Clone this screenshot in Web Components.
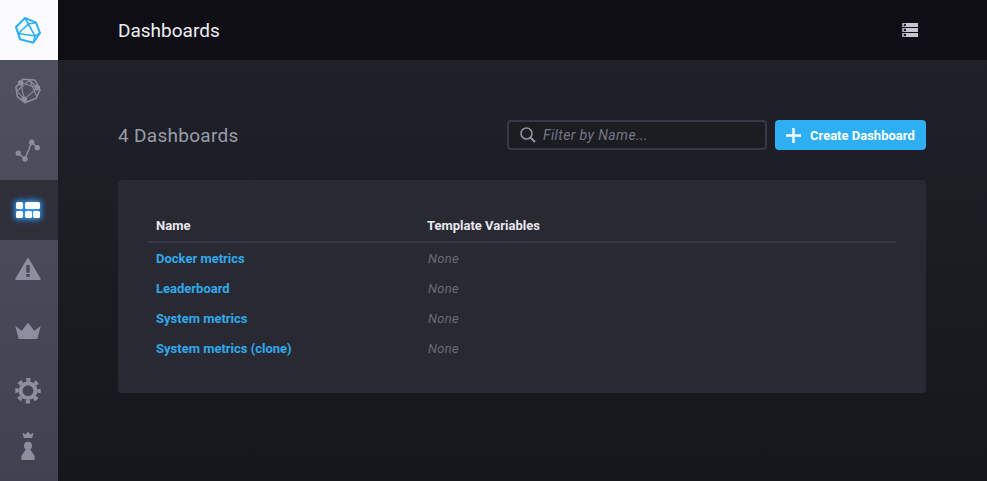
<!DOCTYPE html>
<html>
<head>
<meta charset="utf-8">
<title>Dashboards</title>
<style>
  html, body { margin: 0; height: 100%; }
  body { background: #0f0e15; font-family: Roboto, "Liberation Sans", sans-serif; overflow: hidden; }
</style>
</head>
<body>
<app-shell>
  <side-nav slot="nav"></side-nav>
  <page-header slot="header" title="Dashboards"></page-header>
  <dash-toolbar count="4 Dashboards"></dash-toolbar>
  <dash-table>
    <dash-row name="Docker metrics"></dash-row>
    <dash-row name="Leaderboard"></dash-row>
    <dash-row name="System metrics"></dash-row>
    <dash-row name="System metrics (clone)"></dash-row>
  </dash-table>
</app-shell>

<script>
// Shell: sidebar on the left, header and scrolling page on the right
class AppShell extends HTMLElement {
  constructor() {
    super();
    this.attachShadow({ mode: 'open' });
    this.shadowRoot.innerHTML = `
      <style>
        :host { display: flex; width: 987px; height: 481px; }
        .main { flex: 1; display: flex; flex-direction: column; min-width: 0; }
        .page {
          flex: 1;
          display: flex;
          flex-direction: column;
          padding: 60px 61px 0 60px;
          background: linear-gradient(to bottom, #202028 0%, #16161d 100%);
        }
      </style>
      <slot name="nav"></slot>
      <div class="main">
        <slot name="header"></slot>
        <div class="page"><slot></slot></div>
      </div>
    `;
  }
}

// Sidebar icons, drawn in the 58x60 box of their cell
const NAV_ICONS = {
  logo: `
    <g fill="none" stroke="currentColor" stroke-linejoin="round">
      <path stroke-width="2" d="M16 27 L25 18 L36 22.700 L40 33 L33.300 42.700 L20 39.300 Z"/>
      <path stroke-width="1.600" d="M25 18 L28.300 24 L36 22.700 M28.300 24 L18.500 33.500 L35 36 Z M16 27 L18.500 33.500 L20 39.300 M40 33 L35 36 L33.300 42.700"/>
    </g>`,
  hosts: `
    <g fill="none" stroke="currentColor" stroke-linejoin="round">
      <path stroke-width="1.500" d="M16 27.300 L22.700 19.300 L35 20 L40 30 L36 38.300 L25 42.700 L17.300 36.700 Z"/>
      <path stroke-width="1.100" d="M20.700 22.700 L37.300 27.700 L24.300 39.300 Z M29.500 20 L37 37 M29.500 20 L17 31 L24.300 39.300 M29.500 20 L37.300 27.700"/>
    </g>
    <g fill="currentColor">
      <circle cx="20.700" cy="22.700" r="2.800"/>
      <circle cx="37.300" cy="27.700" r="2.800"/>
      <circle cx="24.300" cy="39.300" r="2.800"/>
    </g>`,
  graph: `
    <path d="M18.300 33.300 L25 39 L31.700 22.300 L37.300 27.700" fill="none" stroke="currentColor" stroke-width="1.500"/>
    <g fill="currentColor">
      <circle cx="18.300" cy="33.300" r="2.700"/>
      <circle cx="25" cy="39" r="2.700"/>
      <circle cx="31.700" cy="22.300" r="2.700"/>
      <circle cx="37.300" cy="27.700" r="2.700"/>
    </g>`,
  alert: `
    <path fill-rule="evenodd" fill="currentColor" d="M28 18 Q28.600 18 29 18.800 L40.500 38.500 Q41.200 40 39.800 40 L16.200 40 Q14.800 40 15.500 38.500 L27 18.800 Q27.400 18 28 18 Z
      M26.300 25 L26.300 32.700 L29.700 32.700 L29.700 25 Z M26.300 34 L26.300 37 L29.700 37 L29.700 34 Z"/>`,
  crown: `
    <path fill="currentColor" d="M15.300 26 L21.700 30.700 L28 22.700 L34.300 30.700 L40.700 26 L37.300 39 L18.700 39 Z"/>`,
  gear: `
    <g fill="none" stroke="currentColor">
      <circle cx="28" cy="30.700" r="7.400" stroke-width="4"/>
      <circle cx="28" cy="30.700" r="11" stroke-width="3.500" stroke-dasharray="4.320 4.320" stroke-dashoffset="2.160"/>
    </g>`,
  admin: `
    <path fill="currentColor" d="M22.700 12.500 L25.500 14.500 L28 11.700 L30.500 14.500 L33.300 12.500 L32.300 18 L23.700 18 Z"/>
    <circle fill="currentColor" cx="28" cy="25.700" r="4"/>
    <path fill="currentColor" d="M25.500 29.300 H30.500 Q31 31.500 33 33.500 Q34.700 35 34.700 37 V39 Q34.700 40 33.700 40 H22.300 Q21.300 40 21.300 39 V37 Q21.300 35 23 33.500 Q25 31.500 25.500 29.300 Z"/>`
};

class NavItem extends HTMLElement {
  constructor() {
    super();
    this.attachShadow({ mode: 'open' });
    this.shadowRoot.innerHTML = `
      <style>
        :host {
          display: block;
          height: 60px;
          color: #8d8fa0;
        }
        :host([logo]) { background: #fbfbfe; color: #2fb0f3; }
        svg { width: 58px; height: 60px; display: block; }
      </style>
      <svg viewBox="0 0 58 60">${NAV_ICONS[this.getAttribute('icon')] || ''}</svg>
    `;
  }
}

class SideNav extends HTMLElement {
  constructor() {
    super();
    this.attachShadow({ mode: 'open' });
    this.shadowRoot.innerHTML = `
      <style>
        :host {
          display: flex;
          flex-direction: column;
          width: 58px;
          flex: none;
          background: linear-gradient(to bottom, #525361 0%, #414250 100%);
        }
        .dash {
          height: 60px;
          display: flex;
          align-items: center;
          justify-content: center;
          padding-right: 2px;
          box-sizing: border-box;
          background: #2f2f3a;
        }
        .grid {
          display: grid;
          grid-template-columns: 7px 7px 7px;
          grid-template-rows: 7px 7px;
          gap: 1.5px;
          filter: drop-shadow(0 0 3px #2f95f0) drop-shadow(0 0 2px #2f95f0);
        }
        .grid i { background: #fff; border-radius: 1.5px; display: block; }
        .grid i:nth-child(2) { grid-column: span 2; }
      </style>
      <nav-item icon="logo" logo></nav-item>
      <nav-item icon="hosts"></nav-item>
      <nav-item icon="graph"></nav-item>
      <div class="dash"><div class="grid"><i></i><i></i><i></i><i></i><i></i></div></div>
      <nav-item icon="alert"></nav-item>
      <nav-item icon="crown"></nav-item>
      <nav-item icon="gear"></nav-item>
      <nav-item icon="admin"></nav-item>
    `;
  }
}

class PageHeader extends HTMLElement {
  constructor() {
    super();
    this.attachShadow({ mode: 'open' });
    this.shadowRoot.innerHTML = `
      <style>
        :host {
          display: flex;
          align-items: center;
          justify-content: space-between;
          height: 60px;
          flex: none;
          padding: 0 69px 0 60px;
          background: #0f0e15;
        }
        h1 {
          margin: 2px 0 0;
          font: 400 19px/24px Roboto, sans-serif;
          color: #eeeff2;
        }
        .srv { display: flex; flex-direction: column; gap: 1px; }
        .srv i {
          position: relative;
          display: block;
          width: 16px;
          height: 4px;
          background: linear-gradient(to right, #8f919f, #c4c6d2 5px);
        }
        .srv i::after {
          content: "";
          position: absolute;
          left: 2px;
          top: 1px;
          width: 2px;
          height: 2px;
          background: #1c1c24;
        }
      </style>
      <h1>${this.getAttribute('title')}</h1>
      <div class="srv"><i></i><i></i><i></i></div>
    `;
  }
}

class DashToolbar extends HTMLElement {
  constructor() {
    super();
    this.attachShadow({ mode: 'open' });
    this.shadowRoot.innerHTML = `
      <style>
        :host {
          display: flex;
          align-items: center;
          height: 30px;
          flex: none;
        }
        h2 {
          margin: 2px auto 0 0;
          font: 400 19px/30px Roboto, sans-serif;
          letter-spacing: 0.3px;
          color: #999dab;
        }
        .filter {
          box-sizing: border-box;
          width: 260px;
          height: 30px;
          margin-right: 8px;
          display: flex;
          align-items: center;
          gap: 6px;
          padding: 0 10px;
          border: 2px solid #383846;
          border-radius: 4px;
          background: #1c1c23;
          font: italic 400 14px Roboto, sans-serif;
          color: #747685;
          letter-spacing: 0.4px;
        }
        .filter svg { width: 18px; height: 18px; flex: none; }
        button {
          display: flex;
          align-items: center;
          gap: 9px;
          height: 30px;
          width: 151px;
          padding: 0 0 0 11px;
          box-sizing: border-box;
          border: 0;
          border-radius: 4px;
          background: #2eaef3;
          color: #fff;
          font: 700 13px Roboto, sans-serif;
          white-space: nowrap;
        }
        button svg { width: 15px; height: 15px; flex: none; }
      </style>
      <h2>${this.getAttribute('count')}</h2>
      <div class="filter">
        <svg viewBox="0 0 18 18" fill="none" stroke="#8e91a1" stroke-width="1.600"><circle cx="7.500" cy="7.500" r="5.500"/><path d="M11.500 11.500 L16 16" stroke-width="2.200"/></svg>
        <span>Filter by Name...</span>
      </div>
      <button>
        <svg viewBox="0 0 15 15"><path d="M6.300 0 H8.700 V6.300 H15 V8.700 H8.700 V15 H6.300 V8.700 H0 V6.300 H6.300 Z" fill="#fff"/></svg>
        Create Dashboard
      </button>
    `;
  }
}

class DashTable extends HTMLElement {
  constructor() {
    super();
    this.attachShadow({ mode: 'open' });
    this.shadowRoot.innerHTML = `
      <style>
        :host {
          display: block;
          margin-top: 30px;
          padding: 30px;
          height: 213px;
          box-sizing: border-box;
          background: #292933;
          border-radius: 4px;
        }
        .head {
          display: grid;
          grid-template-columns: 271px 1fr;
          align-items: center;
          height: 31px;
          padding-left: 8px;
          box-sizing: border-box;
          font: 700 13px Roboto, sans-serif;
          color: #e7e8ee;
        }
        .rule { height: 2px; background: #383846; }
      </style>
      <div class="head"><span>Name</span><span>Template Variables</span></div>
      <div class="rule"></div>
      <slot></slot>
    `;
  }
}

class DashRow extends HTMLElement {
  constructor() {
    super();
    this.attachShadow({ mode: 'open' });
    this.shadowRoot.innerHTML = `
      <style>
        :host {
          display: grid;
          grid-template-columns: 271px 1fr;
          align-items: center;
          height: 30px;
          padding-left: 8px;
          font: 700 13px Roboto, sans-serif;
        }
        a { color: #2fa9ec; text-decoration: none; }
        em { font: italic 400 13px Roboto, sans-serif; color: #676977; letter-spacing: 0.3px; padding-left: 1px; }
      </style>
      <a href="#">${this.getAttribute('name')}</a>
      <em>None</em>
    `;
  }
}

customElements.define('app-shell', AppShell);
customElements.define('nav-item', NavItem);
customElements.define('side-nav', SideNav);
customElements.define('page-header', PageHeader);
customElements.define('dash-toolbar', DashToolbar);
customElements.define('dash-table', DashTable);
customElements.define('dash-row', DashRow);
</script>
</body>
</html>
